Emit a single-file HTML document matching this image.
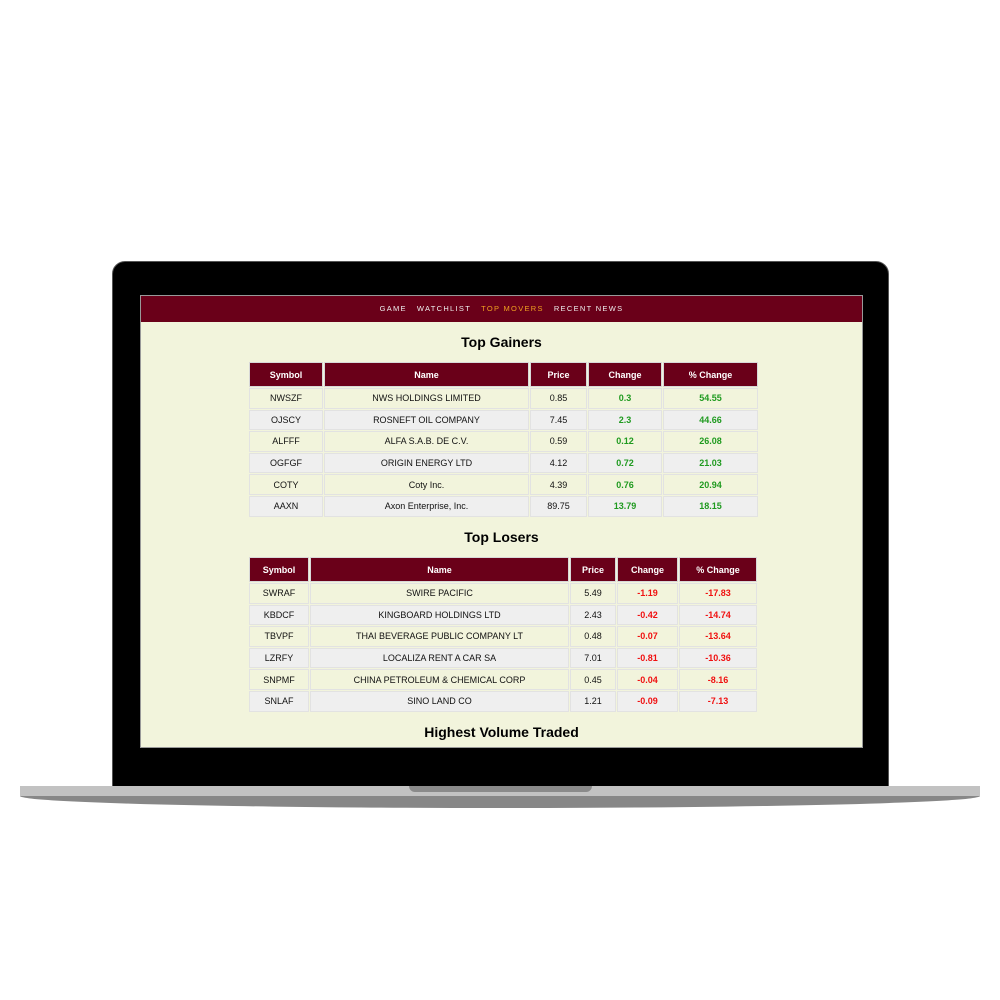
<!DOCTYPE html>
<html><head><style>
*{margin:0;padding:0;box-sizing:border-box}
body{width:1000px;height:1000px;background:#fff;position:relative;font-family:"Liberation Sans",Arial,sans-serif;overflow:hidden}
.lap{position:absolute;left:112px;top:261px;width:777px;height:527px;background:#000;border-radius:13px 13px 0 0;border:1px solid #555}
.base1{position:absolute;left:20px;top:786px;width:960px;height:10px;background:#c2c2c2}
.base2{position:absolute;left:20px;top:796px;width:960px;height:12px;background:#878787;border-radius:0 0 50% 50%/0 0 100% 100%}
.notch{position:absolute;left:409px;top:786px;width:183px;height:6px;background:#8a8a8a;border-radius:0 0 6px 6px}
.screen{position:absolute;left:140px;top:295px;width:723px;height:453px;background:#f2f4dc;border:1px solid #999;overflow:hidden}
.nav{height:26px;background:#6a0019;text-align:center;font-size:7.5px;letter-spacing:1.3px;color:#eee;line-height:25px}
.nav span{margin:0 5px}
.nav .on{color:#f0a020}
h2{position:absolute;width:100%;text-align:center;font-size:14px;font-weight:bold;color:#000}
table{position:absolute;left:107px;border-collapse:separate;border-spacing:1px;table-layout:fixed;font-size:9px;text-align:center}
th{background:#6a0019;color:#fff;height:25px;font-weight:bold;border:1px solid #d8d8d8}
td{height:20.6px;border:1px solid #e2e2e2;color:#111}
tr:nth-child(odd) td{background:#f2f4dc}
tr:nth-child(even) td{background:#efefef}
.g{color:#1f9a1f;font-weight:bold}
.r{color:#f01010;font-weight:bold}
</style></head><body>
<div class="lap"></div>
<div class="base1"></div><div class="base2"></div><div class="notch"></div>
<div class="screen">
<div class="nav"><span>GAME</span><span>WATCHLIST</span><span class="on">TOP MOVERS</span><span>RECENT NEWS</span></div>
<h2 style="top:38px">Top Gainers</h2>
<table style="top:65px;width:511px">
<colgroup><col style="width:74px"><col style="width:205px"><col style="width:57px"><col style="width:74px"><col style="width:95px"></colgroup>
<thead><tr><th>Symbol</th><th>Name</th><th>Price</th><th>Change</th><th>% Change</th></tr></thead>
<tbody>
<tr><td>NWSZF</td><td>NWS HOLDINGS LIMITED</td><td>0.85</td><td class="g">0.3</td><td class="g">54.55</td></tr>
<tr><td>OJSCY</td><td>ROSNEFT OIL COMPANY</td><td>7.45</td><td class="g">2.3</td><td class="g">44.66</td></tr>
<tr><td>ALFFF</td><td>ALFA S.A.B. DE C.V.</td><td>0.59</td><td class="g">0.12</td><td class="g">26.08</td></tr>
<tr><td>OGFGF</td><td>ORIGIN ENERGY LTD</td><td>4.12</td><td class="g">0.72</td><td class="g">21.03</td></tr>
<tr><td>COTY</td><td>Coty Inc.</td><td>4.39</td><td class="g">0.76</td><td class="g">20.94</td></tr>
<tr><td>AAXN</td><td>Axon Enterprise, Inc.</td><td>89.75</td><td class="g">13.79</td><td class="g">18.15</td></tr>
</tbody></table>
<h2 style="top:233px">Top Losers</h2>
<table style="top:260px;width:510px">
<colgroup><col style="width:60px"><col style="width:259px"><col style="width:46px"><col style="width:61px"><col style="width:78px"></colgroup>
<thead><tr><th>Symbol</th><th>Name</th><th>Price</th><th>Change</th><th>% Change</th></tr></thead>
<tbody>
<tr><td>SWRAF</td><td>SWIRE PACIFIC</td><td>5.49</td><td class="r">-1.19</td><td class="r">-17.83</td></tr>
<tr><td>KBDCF</td><td>KINGBOARD HOLDINGS LTD</td><td>2.43</td><td class="r">-0.42</td><td class="r">-14.74</td></tr>
<tr><td>TBVPF</td><td>THAI BEVERAGE PUBLIC COMPANY LT</td><td>0.48</td><td class="r">-0.07</td><td class="r">-13.64</td></tr>
<tr><td>LZRFY</td><td>LOCALIZA RENT A CAR SA</td><td>7.01</td><td class="r">-0.81</td><td class="r">-10.36</td></tr>
<tr><td>SNPMF</td><td>CHINA PETROLEUM &amp; CHEMICAL CORP</td><td>0.45</td><td class="r">-0.04</td><td class="r">-8.16</td></tr>
<tr><td>SNLAF</td><td>SINO LAND CO</td><td>1.21</td><td class="r">-0.09</td><td class="r">-7.13</td></tr>
</tbody></table>
<h2 style="top:428px">Highest Volume Traded</h2>
</div>
</body></html>
